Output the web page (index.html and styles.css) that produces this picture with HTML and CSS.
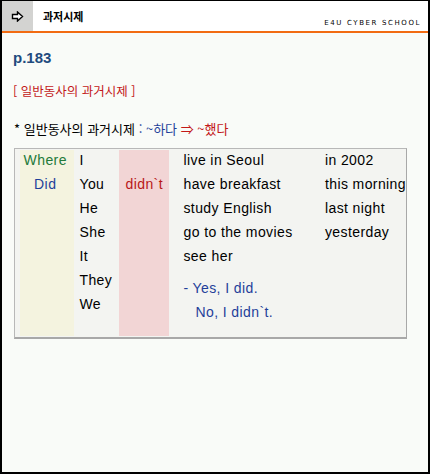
FILE: index.html
```html
<!DOCTYPE html>
<html lang="ko">
<head>
<meta charset="utf-8">
<link rel="stylesheet" href="styles.css">
</head>
<body>
<div class="frame">
  <header class="top">
    <div class="iconbox">
      <svg width="13" height="11" viewBox="0 0 13 11"><path d="M1.5 3.5 H6.5 V1 L11.5 5.5 L6.5 10 V7.5 H1.5 Z" fill="#fff" stroke="#000" stroke-width="1.4" stroke-linejoin="miter"/></svg>
    </div>
    <div class="title">과저시제</div>
    <div class="brand">E4U CYBER SCHOOL</div>
  </header>
  <main class="content">
    <h1 class="page">p.183</h1>
    <p class="topic">[ 일반동사의 과거시제 ]</p>
    <p class="rule">* 일반동사의 과거시제 <span class="blue">: ~하다</span> <span class="red">⇒ ~했다</span></p>
    <div class="table">
      <div class="col c1">
        <div class="cell where">Where</div>
        <div class="cell did">Did</div>
      </div>
      <div class="col c2">
        <div class="cell">I</div>
        <div class="cell">You</div>
        <div class="cell">He</div>
        <div class="cell">She</div>
        <div class="cell">It</div>
        <div class="cell">They</div>
        <div class="cell">We</div>
      </div>
      <div class="col c3">
        <div class="cell"></div>
        <div class="cell neg">didn`t</div>
      </div>
      <div class="col c4">
        <div class="cell">live in Seoul</div>
        <div class="cell">have breakfast</div>
        <div class="cell">study English</div>
        <div class="cell">go to the movies</div>
        <div class="cell">see her</div>
        <div class="cell ans first">- Yes, I did.</div>
        <div class="cell ans indent">No, I didn`t.</div>
      </div>
      <div class="col c5">
        <div class="cell">in 2002</div>
        <div class="cell">this morning</div>
        <div class="cell">last night</div>
        <div class="cell">yesterday</div>
      </div>
    </div>
  </main>
</div>
</body>
</html>
```
FILE: styles.css
```css
html, body {
  margin: 0;
  padding: 0;
  background: #fff;
}
.frame {
  width: 430px;
  height: 474px;
  box-sizing: border-box;
  border: 2px solid #000;
  border-top-width: 1px;
  background: #f9fbf8;
  font-family: "Liberation Sans", Arial, "Noto Sans CJK KR", sans-serif;
  display: flex;
  flex-direction: column;
}
.top {
  height: 30px;
  display: flex;
  align-items: stretch;
  background: #fff;
  border-bottom: 2px solid #f26b12;
}
.iconbox {
  width: 31px;
  background: #d3d3d1;
  display: flex;
  align-items: center;
  justify-content: center;
  padding-top: 1px;
}
.title {
  margin-left: 10px;
  font-family: "Noto Sans CJK KR", sans-serif;
  font-weight: 700;
  font-size: 11px;
  line-height: 30px;
  color: #000;
  flex: 1;
}
.brand {
  align-self: flex-end;
  font-family: "DejaVu Sans", sans-serif;
  font-size: 7px;
  letter-spacing: 1.6px;
  color: #000;
  margin: 0 7px 4px 0;
}
.content {
  padding: 0 20px 0 11px;
}
.page {
  margin: 15px 0 0 0;
  font-size: 15px;
  font-weight: 700;
  color: #1f4b7e;
  line-height: 20px;
}
.topic {
  margin: 14px 0 0 0;
  font-family: "Noto Sans CJK KR", sans-serif;
  font-size: 12.5px;
  line-height: 18px;
  color: #c31818;
}
.rule {
  margin: 20px 0 0 1px;
  font-family: "Noto Sans CJK KR", sans-serif;
  font-size: 13px;
  line-height: 18px;
  color: #000;
}
.blue { color: #1f3f9a; }
.red { color: #c31818; }
.table {
  margin: 10px 0 0 1px;
  width: 393px;
  height: 191px;
  box-sizing: border-box;
  border: 1px solid #b8b8b8;
  border-right-color: #a8a8a8;
  border-bottom: 2px solid #a8a8a8;
  background: #f3f4f1;
  padding: 1px 0 1px 5px;
  display: flex;
  font-size: 14px;
  letter-spacing: 0.4px;
  color: #000;
  white-space: nowrap;
}
.col {
  display: flex;
  flex-direction: column;
}
.cell {
  height: 24px;
  line-height: 20px;
}
.c1 {
  width: 51px;
  padding-right: 4px;
  background: #f4f3df;
  text-align: center;
}
.where { color: #237a3a; }
.did { color: #1f3f9a; }
.c2 {
  width: 40px;
  padding-left: 5px;
}
.c3 {
  width: 51px;
  background: #f2d5d5;
  text-align: center;
}
.neg { color: #b81818; }
.c4 {
  width: 143px;
  padding-left: 14px;
}
.ans { color: #1f3f9a; }
.ans.first { margin-top: 8px; }
.ans.indent { padding-left: 12px; }
.c5 { flex: 1; }
```
